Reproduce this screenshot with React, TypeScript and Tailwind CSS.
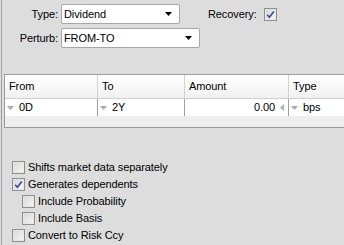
const font = { fontFamily: '"Liberation Sans", Arial, sans-serif' };

function Combo({ value, width }: { value: string; width: string }) {
  return (
    <div
      className={`${width} h-[20px] flex items-center justify-between bg-white border border-[#a7a7a7] rounded-[2px] pl-[2px] pr-[7px]`}
    >
      <span>{value}</span>
      <svg width="7" height="4" viewBox="0 0 7 4">
        <path d="M0 0H7L3.5 4Z" fill="#000" />
      </svg>
    </div>
  );
}

function Check({ checked }: { checked?: boolean }) {
  return (
    <div className="w-[13px] h-[13px] border border-[#8e8f8f] bg-gradient-to-br from-[#d6d6d6] to-[#f7f7f7] flex items-center justify-center shrink-0">
      <div className="w-[11px] h-[11px] border border-[#e6e6e6] flex items-center justify-center">
        {checked && (
          <svg width="9" height="9" viewBox="0 0 9 9">
            <path d="M1.2 4.8L3.4 7.2L7.8 1.5" fill="none" stroke="#3b4d94" strokeWidth="1.7" />
          </svg>
        )}
      </div>
    </div>
  );
}

function CellArrow() {
  return (
    <svg width="7" height="4" viewBox="0 0 7 4" className="shrink-0">
      <path d="M0 0H7L3.5 4Z" fill="#ababab" />
    </svg>
  );
}

const options = [
  { label: "Shifts market data separately", checked: false, indent: false },
  { label: "Generates dependents", checked: true, indent: false },
  { label: "Include Probability", checked: false, indent: true },
  { label: "Include Basis", checked: false, indent: true },
  { label: "Convert to Risk Ccy", checked: false, indent: false },
];

export default function App() {
  return (
    <div
      className="w-[344px] h-[245px] bg-[#dddddd] overflow-hidden text-[11px] tracking-[-0.1px] text-black"
      style={font}
    >
      <div className="ml-px h-full border-l border-[#a3a3a3] pt-[4px]">
        <div className="flex items-center h-[20px]">
          <span className="w-[56px] text-right">Type:</span>
          <div className="ml-[3px]">
            <Combo value="Dividend" width="w-[119px]" />
          </div>
          <span className="ml-[28px]">Recovery:</span>
          <div className="ml-[7px]">
            <Check checked />
          </div>
        </div>
        <div className="flex items-center h-[20px] mt-[4px]">
          <span className="w-[56px] text-right">Perturb:</span>
          <div className="ml-[3px]">
            <Combo value="FROM-TO" width="w-[139px]" />
          </div>
        </div>

        <div className="ml-[2px] mt-[26px] w-[360px] border border-[#9c9c9c] bg-[#eeeeee]">
          <div className="flex h-[24px] bg-gradient-to-b from-white to-[#f1f1f1] border-b border-[#cfcfcf]">
            <div className="w-[93px] flex items-center pl-[4px] border-r border-[#d2d2d2]">From</div>
            <div className="w-[87px] flex items-center pl-[4px] border-r border-[#d2d2d2]">To</div>
            <div className="w-[104px] flex items-center pl-[4px] border-r border-[#d2d2d2]">Amount</div>
            <div className="flex-1 flex items-center pl-[4px]">Type</div>
          </div>
          <div className="flex h-[17px] bg-white">
            <div className="w-[93px] flex items-center pl-[2px] gap-[5px] border-r border-[#a0a0a0]">
              <CellArrow />
              <span>0D</span>
            </div>
            <div className="w-[87px] flex items-center pl-[2px] gap-[5px] border-r border-[#a0a0a0]">
              <CellArrow />
              <span>2Y</span>
            </div>
            <div className="w-[104px] flex items-center justify-end pr-[4px] gap-[5px] border-r border-[#a0a0a0]">
              <span>0.00</span>
              <svg width="4" height="7" viewBox="0 0 4 7">
                <path d="M4 0V7L0 3.5Z" fill="#b0b0b0" />
              </svg>
            </div>
            <div className="flex-1 flex items-center pl-[2px] gap-[5px]">
              <CellArrow />
              <span>bps</span>
            </div>
          </div>
          <div className="h-[11px]" />
        </div>

        <div className="mt-[31px] flex flex-col">
          {options.map((o) => (
            <div
              key={o.label}
              className={`h-[17px] flex items-center gap-[3px] ${o.indent ? "pl-[20px]" : "pl-[10px]"}`}
            >
              <Check checked={o.checked} />
              <span>{o.label}</span>
            </div>
          ))}
        </div>
      </div>
    </div>
  );
}
